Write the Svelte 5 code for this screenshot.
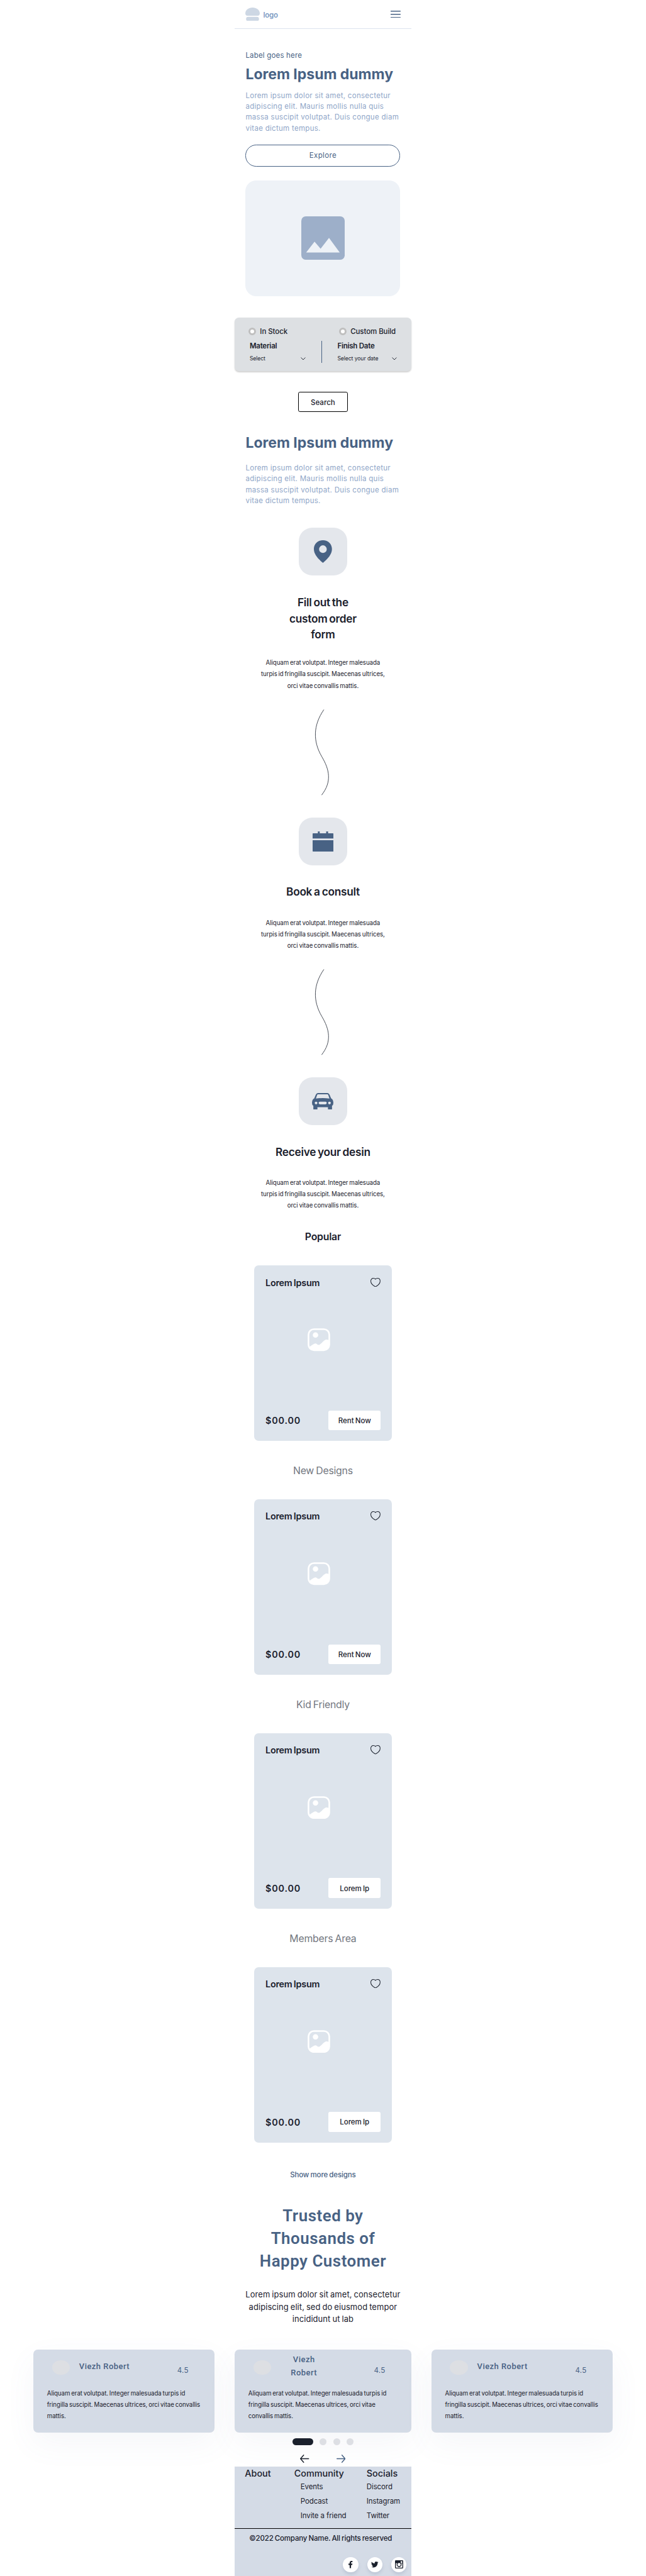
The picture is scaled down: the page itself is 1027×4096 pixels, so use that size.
<script>
  const blurb = 'Lorem ipsum dolor sit amet, consectetur\nadipiscing elit. Mauris mollis nulla quis\nmassa suscipit volutpat. Duis congue diam\nvitae dictum tempus.';
  const stepText = 'Aliquam erat volutpat. Integer malesuada\nturpis id fringilla suscipit. Maecenas ultrices,\norci vitae convallis mattis.';

  const steps = [
    { icon: 'pin', title: 'Fill out the\ncustom order\nform' },
    { icon: 'calendar', title: 'Book a consult' },
    { icon: 'car', title: 'Receive your desin' }
  ];

  const products = [
    { section: 'Popular', action: 'Rent Now' },
    { section: 'New Designs', action: 'Rent Now' },
    { section: 'Kid Friendly', action: 'Lorem Ip' },
    { section: 'Members Area', action: 'Lorem Ip' }
  ];

  const wideQuote = 'Aliquam erat volutpat. Integer malesuada turpis id\nfringilla suscipit. Maecenas ultrices, orci vitae convallis\nmattis.';
  const reviews = [
    { name: 'Viezh Robert', quote: wideQuote },
    { name: 'Viezh\nRobert', active: true, quote: 'Aliquam erat volutpat. Integer malesuada turpis id\nfringilla suscipit. Maecenas ultrices, orci vitae\nconvallis mattis.' },
    { name: 'Viezh Robert', quote: wideQuote }
  ];
</script>

<div class="page">
  <header class="topbar">
    <div class="brand">
      <svg class="mark" viewBox="0 0 32 30">
        <path d="M5 18Q0 18 0 12.5C0.500 5 7.500 0 16 0S31.500 5 32 12.500Q32 18 27 18Z" />
        <rect x="1.7" y="20.500" width="28.500" height="9.500" rx="4.750" />
      </svg>
      <span class="brand-name">logo</span>
    </div>
    <svg class="menu" viewBox="0 0 22 16"><path d="M0 1H22M0 8H22M0 15H22" /></svg>
  </header>

  <section class="hero">
    <p class="eyebrow">Label goes here</p>
    <h1 class="headline">Lorem Ipsum dummy</h1>
    <p class="lead">{blurb}</p>
    <button class="explore">Explore</button>
    <div class="hero-image">
      <svg viewBox="0 0 96 96">
        <rect width="96" height="96" rx="10" fill="#9dafc9" />
        <path d="M10.700 80L29.300 56 42.700 71.700 61.300 47.800 85 80Z" fill="#eef2f7" />
      </svg>
    </div>
  </section>

  <section class="filter">
    <div class="options">
      <label class="option"><span class="radio"></span>In Stock</label>
      <label class="option"><span class="radio"></span>Custom Build</label>
    </div>
    <div class="fields">
      <div class="field first">
        <strong>Material</strong>
        <div class="select"><span>Select</span><svg viewBox="0 0 11 6.500"><path d="M.7 .7L5.500 5.500 10.300 .7" /></svg></div>
      </div>
      <div class="divider"></div>
      <div class="field second">
        <strong>Finish Date</strong>
        <div class="select"><span>Select your date</span><svg viewBox="0 0 11 6.500"><path d="M.7 .7L5.500 5.500 10.300 .7" /></svg></div>
      </div>
    </div>
  </section>
  <button class="search">Search</button>

  <section class="intro">
    <h2 class="headline">Lorem Ipsum dummy</h2>
    <p class="lead">{blurb}</p>
  </section>

  <section class="steps">
    {#each steps as step, i}
      {#if i > 0}
        <svg class="wave" viewBox="0 0 32 190"><path d="M20.700 .5C-3 35 -4 70 16.300 104.800C33 133 39 160 15.700 189.500" /></svg>
      {/if}
      <div class="tile">
        {#if step.icon === 'pin'}
          <svg class="pin" viewBox="0 0 40 50"><path fill-rule="evenodd" d="M20 0C8.500 0 0 8.500 0 19.500C0 31 9 41 20 50C31 41 40 31 40 19.500C40 8.500 31.500 0 20 0ZM20 11.300a8.500 8.500 0 1 1 0 17a8.500 8.500 0 1 1 0-17Z" /></svg>
        {:else if step.icon === 'calendar'}
          <svg class="calendar" viewBox="0 0 46 45"><path d="M1 4.300H11.600V0H15.700V4.300H30V0H34.200V4.300H45Q46 4.300 46 5.300V15.600H0V5.300Q0 4.300 1 4.300ZM0 19.500H46V43.500Q46 44.500 45 44.500H1Q0 44.500 0 43.500Z" /></svg>
        {:else}
          <svg class="car" viewBox="0 0 142 111"><path fill-rule="evenodd" d="M15 35L25 11Q30 0 39 0H103Q112 0 117 11L127 35Q142 42 142 66Q142 80 133 85V107Q133 111 129 111H110Q106 111 106 107V94H36V107Q36 111 32 111H13Q9 111 9 107V85Q0 80 0 66Q0 42 15 35ZM34 13L26 36Q71 31 116 36L108 13Q106 8 102 8H40Q36 8 34 13ZM27 57a9 9 0 1 0 0 18a9 9 0 1 0 0-18ZM116 57a9 9 0 1 0 0 18a9 9 0 1 0 0-18ZM53 57a9 9 0 0 0 0 18H89a9 9 0 0 0 0-18Z" /></svg>
        {/if}
      </div>
      <h3>{step.title}</h3>
      <p class:after-long={i === 0}>{stepText}</p>
    {/each}
  </section>

  <section class="catalog">
    {#each products as product, i}
      <h3 class:current={i === 0}>{product.section}</h3>
      <article class="card">
        <div class="card-head">
          <span class="card-title">Lorem Ipsum</span>
          <svg class="heart" viewBox="0 0 22 20"><path d="M11 2.700C12.400 1 14 .8 15.700 .8C19 .8 21.300 3.400 21.300 6.900C21.300 13 15.500 17 12.300 18.800Q11 19.500 9.700 18.800C6.500 17 .7 13 .7 6.900C.7 3.400 3 .8 6.300 .8C8 .8 9.600 1 11 2.700Z" /></svg>
        </div>
        <svg class="picture" viewBox="0 0 50 50.500">
          <rect x="2" y="2" width="46" height="46.500" rx="12" fill="none" stroke="#fff" stroke-width="3.600" />
          <circle cx="17.500" cy="15" r="6" fill="#fff" />
          <path d="M3.500 41C8 39 13 34 17 33.600C20.500 33.500 21.500 36.800 25 36.800C29.500 36.500 35 26.500 41 25.200Q44.500 24.800 47 26.500V38Q47 48 37 48H14Q5 48 3.500 41Z" fill="#fff" />
        </svg>
        <div class="card-foot">
          <span class="price">$00.00</span>
          <button class="rent">{product.action}</button>
        </div>
      </article>
    {/each}
    <a class="more" href="#more">Show more designs</a>
  </section>

  <section class="trust">
    <h2>{'Trusted by\nThousands of\nHappy Customer'}</h2>
    <p>{'Lorem ipsum dolor sit amet, consectetur\nadipiscing elit, sed do eiusmod tempor\nincididunt ut lab'}</p>
  </section>

  <section class="reviews">
    {#each reviews as review}
      <article class="review" class:active={review.active}>
        <div class="review-head">
          <span class="avatar"></span>
          <span class="name">{review.name}</span>
          <span class="score">4.5</span>
        </div>
        <p>{review.quote}</p>
      </article>
    {/each}
  </section>

  <div class="dots"><span class="on"></span><span></span><span></span><span></span></div>
  <div class="arrows">
    <svg viewBox="0 0 20 18"><path d="M19 9H1M8 1L1 9L8 17" stroke="#1a202c" /></svg>
    <svg viewBox="0 0 20 18"><path d="M1 9H19M12 1L19 9L12 17" stroke="#486284" /></svg>
  </div>

  <footer>
    <div class="columns">
      <div class="col"><h4>About</h4></div>
      <div class="col">
        <h4>Community</h4>
        <ul class="indent"><li>Events</li><li>Podcast</li><li>Invite a friend</li></ul>
      </div>
      <div class="col">
        <h4>Socials</h4>
        <ul><li>Discord</li><li>Instagram</li><li>Twitter</li></ul>
      </div>
    </div>
    <p class="copyright">©2022 Company Name. All rights reserved</p>
    <div class="socials">
      <span class="social"><svg width="9" height="16" viewBox="0 0 9 16"><path d="M2.600 16V9H0V6H2.600V4.300C2.600 1.500 4.200 0 6.700 0H8.800V2.900H7.300C6.100 2.900 5.700 3.500 5.700 4.500V6H8.700L8.300 9H5.700V16Z" /></svg></span>
      <span class="social"><svg width="16" height="16" viewBox="0 0 24 24"><path d="M23.953 4.570a10 10 0 01-2.825.775 4.958 4.958 0 002.163-2.723c-.951.555-2.005.959-3.127 1.184a4.920 4.920 0 00-8.384 4.482C7.690 8.095 4.067 6.130 1.640 3.162a4.822 4.822 0 00-.666 2.475c0 1.710.870 3.213 2.188 4.096a4.904 4.904 0 01-2.228-.616v.060a4.923 4.923 0 003.946 4.827 4.996 4.996 0 01-2.212.085 4.936 4.936 0 004.604 3.417 9.867 9.867 0 01-6.102 2.105c-.390 0-.779-.023-1.170-.067a13.995 13.995 0 007.557 2.209c9.053 0 13.998-7.496 13.998-13.985 0-.210 0-.420-.015-.630A9.935 9.935 0 0024 4.590z" /></svg></span>
      <span class="social"><svg width="18" height="18" viewBox="0 0 18 18"><path fill-rule="evenodd" d="M1.500 0H16.500Q18 0 18 1.500V16.500Q18 18 16.500 18H1.500Q0 18 0 16.500V1.500Q0 0 1.500 0ZM12.500 2V5.500H16V2ZM1.800 6.500V16.200H16.200V6.500H13.200A5.200 5.200 0 1 1 4.800 6.500ZM9 5.800a3.500 3.500 0 1 0 0 7a3.500 3.500 0 1 0 0-7Z" /></svg></span>
    </div>
  </footer>
</div>

<style>
  :global(body) {
    background: #fff;
    overflow: hidden;
  }
  .page {
    zoom: 0.71905;
    width: 1428px;
    height: 5697px;
    overflow: hidden;
    display: flex;
    flex-direction: column;
    align-items: center;
    font-family: Inter, 'Liberation Sans', sans-serif;
    color: #1a202c;
  }
  .page * {
    box-sizing: border-box;
  }
  h1, h2, h3, h4, p, ul {
    margin: 0;
    padding: 0;
    white-space: pre-line;
  }
  li {
    list-style: none;
  }
  button {
    padding: 0;
    font: inherit;
    color: inherit;
  }
  svg {
    display: block;
    flex: none;
  }
  section, footer, .topbar {
    flex: none;
  }

  .topbar {
    width: 390px;
    height: 64px;
    padding: 0 23px 0 24px;
    border-bottom: 1px solid #dce3ef;
    display: flex;
    align-items: center;
    justify-content: space-between;
  }
  .brand {
    display: flex;
    align-items: center;
    gap: 7px;
  }
  .mark {
    width: 32px;
    height: 30px;
    fill: #cdd7e4;
  }
  .brand-name {
    padding-top: 4px;
    font-size: 16px;
    line-height: 20px;
    font-weight: 600;
    letter-spacing: -0.35px;
    color: #809cc4;
  }
  .menu {
    width: 22px;
    height: 16px;
    stroke: #486284;
    stroke-width: 2;
  }

  .hero {
    width: 342px;
    padding-top: 47.900px;
  }
  .eyebrow {
    font-size: 16px;
    line-height: 24px;
    letter-spacing: 0.250px;
    color: #486284;
  }
  .headline {
    font-size: 32px;
    line-height: 40px;
    font-weight: 700;
    letter-spacing: -0.030px;
    white-space: nowrap;
    color: #486284;
  }
  .hero .headline {
    margin-top: 8.800px;
  }
  .lead {
    font-size: 16px;
    line-height: 24px;
    letter-spacing: 0.410px;
    white-space: pre;
    color: #8fa6c8;
  }
  .hero .lead {
    margin-top: 15.500px;
  }
  .explore {
    display: block;
    width: 342px;
    height: 48px;
    margin-top: 23.800px;
    border: 1px solid #486284;
    border-radius: 24px;
    background: none;
    font-size: 16px;
    letter-spacing: 0.490px;
    color: #486284;
  }
  .hero-image {
    height: 256px;
    margin-top: 31px;
    border-radius: 24px;
    background: #eef2f7;
    display: flex;
    align-items: center;
    justify-content: center;
  }
  .hero-image svg {
    width: 96px;
    height: 96px;
  }

  .filter {
    width: 390px;
    height: 117.500px;
    margin-top: 48px;
    padding-top: 18.600px;
    border-radius: 10px;
    background: #dde0e3;
    box-shadow: 0 2px 3px rgba(0, 0, 0, 0.180);
  }
  .options {
    display: grid;
    grid-template-columns: 200px 1fr;
    padding-left: 31px;
  }
  .option {
    display: flex;
    align-items: center;
    gap: 8.500px;
    font-size: 16px;
    line-height: 24px;
    font-weight: 500;
    letter-spacing: -0.120px;
    white-space: nowrap;
  }
  .radio {
    width: 16.400px;
    height: 16.400px;
    border: 4.300px solid #bfbfbf;
    border-radius: 50%;
    background: #fff;
  }
  .fields {
    display: flex;
    margin-top: 8.700px;
    padding-left: 33px;
  }
  .field strong {
    display: block;
    margin-bottom: 6.500px;
    font-size: 16px;
    line-height: 24px;
    font-weight: 600;
    letter-spacing: -0.330px;
  }
  .first {
    width: 123.500px;
  }
  .second {
    width: 131.500px;
  }
  .select {
    display: flex;
    align-items: center;
    justify-content: space-between;
    font-size: 12px;
    line-height: 18px;
    letter-spacing: -0.100px;
  }
  .select svg {
    width: 11px;
    height: 6.500px;
    fill: none;
    stroke: #1a202c;
    stroke-width: 1.300;
  }
  .divider {
    width: 1px;
    height: 48px;
    margin: 0 34px 0 35.500px;
    background: #486284;
  }
  .search {
    flex: none;
    width: 110px;
    height: 44px;
    margin-top: 46.500px;
    padding-top: 2px;
    border: 1px solid #000;
    border-radius: 4px;
    background: #fff;
    font-size: 16px;
    font-weight: 500;
  }

  .intro {
    width: 342px;
    margin-top: 49px;
  }
  .intro .lead {
    margin-top: 23.900px;
  }

  .steps {
    width: 390px;
    margin-top: 47.300px;
    display: flex;
    flex-direction: column;
    align-items: center;
    text-align: center;
  }
  .tile {
    width: 106px;
    height: 106px;
    border-radius: 30px;
    background: #e4e7ec;
    display: flex;
    align-items: center;
    justify-content: center;
  }
  .tile svg {
    fill: #486284;
  }
  .pin {
    width: 40px;
    height: 50px;
  }
  .calendar {
    width: 46px;
    height: 45px;
  }
  .car {
    width: 47.300px;
    height: 37px;
  }
  .steps h3 {
    margin-top: 40.900px;
    font-size: 24px;
    line-height: 36px;
    font-weight: 600;
    letter-spacing: -0.400px;
    word-spacing: -1.500px;
  }
  .steps p {
    margin-top: 38.100px;
    font-size: 13.500px;
    line-height: 25.200px;
    letter-spacing: -0.090px;
    word-spacing: -1.100px;
  }
  .steps p.after-long {
    margin-top: 31.900px;
  }
  .wave {
    width: 32px;
    height: 190px;
    margin: 39.600px 4px 48.600px 0;
    fill: none;
    stroke: #1a202c;
    stroke-width: 1.100;
  }

  .catalog {
    display: flex;
    flex-direction: column;
    align-items: center;
    margin-top: -9.200px;
  }
  .catalog h3 {
    margin: 49.600px 0 47.500px;
    font-size: 22px;
    line-height: 32px;
    font-weight: 400;
    letter-spacing: -0.300px;
    word-spacing: -1.500px;
    color: #73777f;
  }
  .catalog h3.current {
    font-weight: 600;
    color: #1a202c;
  }
  .card {
    width: 304px;
    height: 388px;
    padding: 23.700px 24px 23.800px 25px;
    border-radius: 10px;
    background: #dde4ec;
    display: flex;
    flex-direction: column;
  }
  .card-head, .card-foot {
    display: flex;
    align-items: center;
    justify-content: space-between;
  }
  .card-title {
    font-size: 20px;
    line-height: 28px;
    font-weight: 600;
    letter-spacing: -0.340px;
    word-spacing: -1.500px;
  }
  .heart {
    width: 22px;
    height: 20px;
    margin: 0 1px 2px 0;
    fill: none;
    stroke: #1a202c;
    stroke-width: 1.400;
  }
  .picture {
    width: 50px;
    height: 50.500px;
    margin: 87.300px 0 0 93.300px;
  }
  .card-foot {
    margin-top: auto;
  }
  .price {
    padding-top: 1px;
    font-size: 20px;
    font-weight: 600;
    letter-spacing: 1.170px;
  }
  .rent {
    width: 116px;
    height: 44px;
    padding-top: 1.500px;
    border: 0;
    border-radius: 4px;
    background: #fff;
    font-size: 16px;
    font-weight: 500;
    letter-spacing: -0.070px;
    word-spacing: -1px;
  }
  .more {
    margin-top: 60px;
    font-size: 16px;
    line-height: 24px;
    font-weight: 500;
    letter-spacing: -0.180px;
    word-spacing: -1px;
    text-decoration: none;
    color: #486284;
  }

  .trust {
    width: 390px;
    margin-top: 53.600px;
    text-align: center;
  }
  .trust h2 {
    font-family: Roboto, sans-serif;
    font-size: 36px;
    line-height: 50px;
    font-weight: 600;
    letter-spacing: 0.730px;
    color: #486284;
  }
  .trust p {
    margin-top: 35.800px;
    font-size: 18px;
    line-height: 27px;
    letter-spacing: 0.120px;
    word-spacing: -1px;
    white-space: pre;
  }

  .reviews {
    display: flex;
    gap: 45px;
    margin-top: 53.900px;
  }
  .review {
    width: 400px;
    height: 183.600px;
    border-radius: 10px;
    background: #d4dbe6;
    box-shadow: 0 24px 70px rgba(90, 105, 150, 0.060);
  }
  .review.active {
    width: 390px;
  }
  .review-head {
    display: flex;
    height: 72.400px;
    padding: 0 57px 0 41px;
    align-items: center;
  }
  .avatar {
    width: 40px;
    height: 32px;
    margin-top: 7px;
    border-radius: 50%;
    background: #dddfe3;
  }
  .name {
    margin-left: 20px;
    font-family: Roboto, sans-serif;
    font-size: 18px;
    line-height: 30px;
    font-weight: 500;
    letter-spacing: 0.680px;
    text-align: center;
    white-space: pre;
    color: #486284;
  }
  .active .name {
    margin-left: 43px;
  }
  .score {
    margin: 18px 0 0 auto;
    font-size: 16px;
    letter-spacing: 0.460px;
    color: #486284;
  }
  .review p {
    margin-top: 11.500px;
    padding-left: 30px;
    font-size: 13.500px;
    line-height: 25px;
    letter-spacing: -0.080px;
    word-spacing: -1.100px;
    white-space: pre;
  }

  .dots {
    flex: none;
    display: flex;
    gap: 15px;
    margin: 11.700px 0 0 1px;
  }
  .dots span {
    width: 15px;
    height: 15px;
    border-radius: 8px;
    background: #dddfe4;
  }
  .dots .on {
    width: 45px;
    background: #1a202c;
  }
  .arrows {
    flex: none;
    display: flex;
    gap: 60px;
    margin-top: 21px;
  }
  .arrows svg {
    width: 20px;
    height: 18px;
    fill: none;
    stroke-width: 2;
    stroke-linejoin: round;
    stroke-linecap: round;
  }

  footer {
    position: relative;
    width: 390px;
    height: 242px;
    margin-top: 9px;
    padding-top: 3.200px;
    background: #d4dbe6;
  }
  .columns {
    display: grid;
    grid-template-columns: 109px 160px 1fr;
    height: 134.500px;
    padding-left: 22.500px;
    border-bottom: 1px solid #000;
  }
  h4 {
    font-size: 20px;
    line-height: 26px;
    font-weight: 500;
  }
  li {
    font-size: 16px;
    line-height: 32px;
    letter-spacing: -0.150px;
  }
  .indent {
    padding-left: 14px;
  }
  .copyright {
    margin: 9px 0 0 32px;
    font-size: 16px;
    line-height: 24px;
    font-weight: 500;
    letter-spacing: -0.230px;
    word-spacing: -1px;
    white-space: nowrap;
  }
  .socials {
    display: flex;
    justify-content: flex-end;
    gap: 19.500px;
    margin-top: 29px;
    padding-right: 10px;
  }
  .social {
    width: 34px;
    height: 34px;
    border-radius: 50%;
    background: #fff;
    box-shadow: 0 5px 8px rgba(60, 80, 120, 0.150);
    display: flex;
    align-items: center;
    justify-content: center;
  }
  .social svg {
    fill: #1a202c;
  }
</style>
